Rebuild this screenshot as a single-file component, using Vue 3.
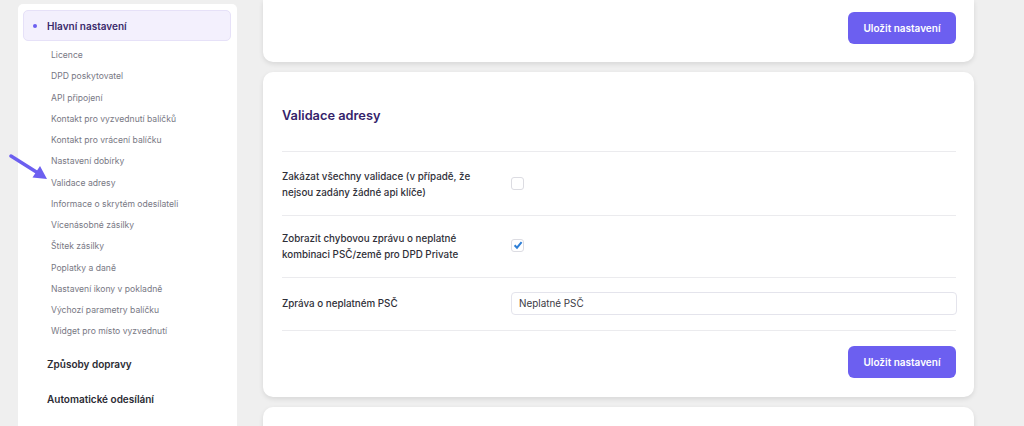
<script setup>
const subItems = [
  'Licence', 'DPD poskytovatel', 'API připojení', 'Kontakt pro vyzvednutí balíčků',
  'Kontakt pro vrácení balíčku', 'Nastavení dobírky', 'Validace adresy',
  'Informace o skrytém odesílateli', 'Vícenásobné zásilky', 'Štítek zásilky',
  'Poplatky a daně', 'Nastavení ikony v pokladně', 'Výchozí parametry balíčku',
  'Widget pro místo vyzvednutí'
]
</script>

<template>
  <div class="page">
    <aside class="sidebar">
      <div class="active-item"><span class="dot"></span>Hlavní nastavení</div>
      <ul class="sub">
        <li v-for="item in subItems" :key="item">{{ item }}</li>
      </ul>
      <div class="top-item first">Způsoby dopravy</div>
      <div class="top-item">Automatické odesílání</div>
      <svg class="arrow" width="42" height="30" viewBox="0 0 42 30">
        <path d="M2 3 L29 20" stroke="#6c5ff0" stroke-width="3.4" stroke-linecap="round" fill="none" />
        <path d="M38 26 L23.5 24.5 L31 13 Z" fill="#6c5ff0" />
      </svg>
    </aside>
    <main class="main">
      <section class="card top-card">
        <button class="btn">Uložit nastavení</button>
      </section>
      <section class="card">
        <h2>Validace adresy</h2>
        <div class="row r1">
          <label>Zakázat všechny validace (v případě, že nejsou zadány žádné api klíče)</label>
          <span class="check"></span>
        </div>
        <div class="row r2">
          <label>Zobrazit chybovou zprávu o neplatné kombinaci PSČ/země pro DPD Private</label>
          <span class="check">
            <svg width="12" height="12" viewBox="0 0 12 12"><path d="M2.6 6.2 L5 8.7 L9.6 3.2" stroke="#2f7fd6" stroke-width="2" fill="none" /></svg>
          </span>
        </div>
        <div class="row r3">
          <label>Zpráva o neplatném PSČ</label>
          <input class="input" value="Neplatné PSČ" />
        </div>
        <div class="foot"><button class="btn">Uložit nastavení</button></div>
      </section>
      <section class="card last-card"></section>
    </main>
  </div>
</template>

<style>
html, body { margin: 0; height: 426px; overflow: hidden; background: #efefef; }
</style>

<style scoped>
.page {
  display: flex;
  align-items: flex-start;
  gap: 26px;
  height: 426px;
  overflow: hidden;
  padding: 4px 0 0 18px;
  box-sizing: border-box;
  font-family: Inter, "Noto Sans", sans-serif;
}
.sidebar {
  position: relative;
  width: 219px;
  flex: none;
  height: 440px;
  box-sizing: border-box;
  padding: 6px 6px 0 5px;
  background: #fff;
  border-radius: 5px;
}
.active-item {
  display: flex;
  align-items: center;
  height: 31px;
  box-sizing: border-box;
  background: #f3f0fd;
  border: 1px solid #e6e1f8;
  border-radius: 5px;
  font-size: 10px;
  font-weight: 600;
  color: #3a2a6b;
  padding-left: 9px;
}
.dot {
  width: 4px;
  height: 4px;
  border-radius: 50%;
  background: #6c5ff0;
  margin-right: 10px;
}
.sub {
  list-style: none;
  margin: 4px 0 0;
  padding: 0 0 0 28px;
}
.sub li {
  height: 21.25px;
  line-height: 21.25px;
  font-size: 8.6px;
  color: #787884;
  white-space: nowrap;
}
.top-item {
  font-size: 10px;
  font-weight: 600;
  color: #2b2b33;
  padding-left: 24px;
  height: 35px;
  line-height: 35px;
}
.top-item.first { margin-top: 4px; }
.arrow {
  position: absolute;
  left: -9px;
  top: 149px;
}
.main {
  width: 711px;
  flex: none;
  display: flex;
  flex-direction: column;
  gap: 10px;
  margin-top: -4px;
}
.card {
  background: #fff;
  border-radius: 10px;
  box-shadow: 0 2px 5px rgba(0, 0, 0, 0.1);
  padding: 0 18px 0 19px;
}
.top-card {
  height: 62px;
  box-sizing: border-box;
  border-radius: 0 0 10px 10px;
  display: flex;
  justify-content: flex-end;
  padding-top: 12px;
}
h2 {
  margin: 0;
  height: 79px;
  line-height: 87px;
  font-size: 12.8px;
  font-weight: 600;
  color: #35236b;
  border-bottom: 1px solid #ebebee;
}
.row {
  display: flex;
  align-items: center;
  border-bottom: 1px solid #ebebee;
  box-sizing: border-box;
}
.r1 { height: 64px; }
.r2 { height: 62px; }
.r3 { height: 53px; }
.r1 label { padding-top: 3px; }
.r2 label { padding-top: 1px; }
.r2 .check { margin-top: -3px; }
.r1 .check { margin-top: -1px; }
label {
  flex: none;
  width: 229px;
  box-sizing: border-box;
  padding-right: 24px;
  font-size: 9.8px;
  line-height: 16px;
  font-weight: 500;
  color: #2f2f38;
}
.check {
  width: 11px;
  height: 11px;
  border: 1px solid #dcdce2;
  border-radius: 3px;
  background: #fff;
  display: flex;
  align-items: center;
  justify-content: center;
}
.check svg { flex: none; }
.input {
  width: 446px;
  height: 23px;
  box-sizing: border-box;
  border: 1px solid #e4e4ec;
  border-radius: 4px;
  padding: 0 7px;
  font: 400 9.9px Inter, "Noto Sans", sans-serif;
  color: #3a3a44;
  margin: 0 -1px 2px 0;
}
.foot {
  display: flex;
  justify-content: flex-end;
  padding: 15px 0 19px;
}
.btn {
  width: 108px;
  height: 32px;
  border: 0;
  border-radius: 6px;
  background: #6c5ff0;
  color: #fff;
  font: 600 10px Inter, "Noto Sans", sans-serif;
  padding: 0;
}
.last-card { height: 40px; flex: none; }
</style>
